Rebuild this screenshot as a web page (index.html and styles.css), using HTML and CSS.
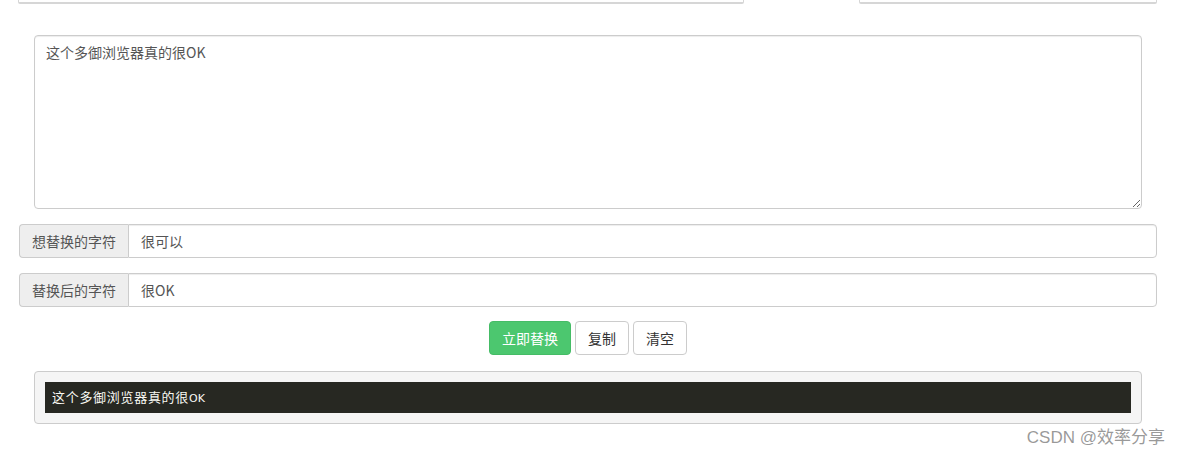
FILE: index.html
```html
<!DOCTYPE html>
<html lang="zh-CN">
<head>
    <meta charset="UTF-8">
    <meta name="viewport" content="width=device-width, initial-scale=1.0">
    <title>字符替换</title>
    <link rel="stylesheet" href="styles.css">
</head>
<body>
    <div class="page">
        <div class="tabs">
            <div class="tab tab-left"></div>
            <div class="tab-gap"></div>
            <div class="tab tab-right"></div>
        </div>

        <div class="source-wrap">
            <textarea class="source" id="source">这个多御浏览器真的很OK</textarea>
        </div>

        <div class="input-group">
            <span class="addon">想替换的字符</span>
            <input type="text" class="field" id="from" value="很可以">
        </div>
        <div class="input-group">
            <span class="addon">替换后的字符</span>
            <input type="text" class="field" id="to" value="很OK">
        </div>

        <div class="actions">
            <button class="btn btn-green" onclick="doReplace()">立即替换</button>
            <button class="btn" onclick="copyResult()">复制</button>
            <button class="btn" onclick="clearAll()">清空</button>
        </div>

        <div class="result-wrap">
            <pre class="result" id="result">这个多御浏览器真的很<span class="latin">OK</span></pre>
        </div>

        <div class="watermark">CSDN @效率分享</div>
    </div>

    <script>
        function doReplace() {
            const src = document.getElementById('source').value;
            const from = document.getElementById('from').value;
            const to = document.getElementById('to').value;
            document.getElementById('result').textContent = from ? src.split(from).join(to) : src;
        }

        function copyResult() {
            const text = document.getElementById('result').textContent;
            if (navigator.clipboard) navigator.clipboard.writeText(text);
        }

        function clearAll() {
            document.getElementById('source').value = '';
            document.getElementById('result').textContent = '';
        }
    </script>
</body>
</html>
```

FILE: styles.css
```css
* {
    box-sizing: border-box;
}
body, html {
    margin: 0;
    padding: 0;
    background: #fff;
    font-family: "Microsoft YaHei", "Noto Sans CJK SC", "Liberation Sans", sans-serif;
    font-size: 14px;
    color: #333;
    overflow: hidden;
}
.page {
    width: 1138px;
    margin-left: 19px;
}
.tabs {
    display: flex;
    height: 4px;
}
.tab {
    height: 4px;
    border: 1px solid #d6d6d6;
    border-top: none;
    border-bottom: 2px solid #d6d6d6;
    border-radius: 0 0 2px 2px;
}
.tab-left {
    width: 726px;
    margin-left: -1px;
}
.tab-gap {
    width: 115px;
}
.tab-right {
    flex: 1;
}
.source-wrap {
    padding: 31px 15px 0;
}
.source {
    display: block;
    width: 100%;
    height: 174px;
    padding: 6px 11px;
    border: 1px solid #ccc;
    border-radius: 4px;
    font-family: inherit;
    font-size: 14px;
    line-height: 20px;
    color: #555;
    resize: vertical;
    box-shadow: inset 0 1px 1px rgba(0,0,0,0.075);
}
.input-group {
    display: flex;
    height: 34px;
    margin-top: 15px;
}
.addon {
    width: 109px;
    display: flex;
    align-items: center;
    padding: 0 12px;
    background: #eee;
    border: 1px solid #ccc;
    border-right: none;
    border-radius: 4px 0 0 4px;
    color: #555;
    font-size: 14px;
}
.field {
    flex: 1;
    height: 34px;
    padding: 6px 12px;
    border: 1px solid #ccc;
    border-radius: 0 4px 4px 0;
    font-family: inherit;
    font-size: 14px;
    color: #555;
    box-shadow: inset 0 1px 1px rgba(0,0,0,0.075);
}
.actions {
    display: flex;
    justify-content: center;
    gap: 4px;
    margin-top: 14px;
}
.btn {
    height: 34px;
    padding: 0 12px;
    border: 1px solid #ccc;
    border-radius: 4px;
    background: #fff;
    color: #333;
    font-family: inherit;
    font-size: 14px;
    cursor: pointer;
}
.btn-green {
    background: #4cc76f;
    border-color: #45bc66;
    color: #fff;
}
.result-wrap {
    margin: 16px 15px 0;
    padding: 10px 10px;
    background: #f5f5f5;
    border: 1px solid #ccc;
    border-radius: 4px;
}
.result {
    margin: 0;
    height: 31px;
    padding: 0 7px;
    background: #272822;
    color: #f8f8f2;
    font-family: "Noto Sans CJK SC", "DejaVu Sans Mono", monospace;
    font-size: 13px;
    letter-spacing: 0.7px;
    line-height: 30px;
    white-space: pre;
}
.result .latin {
    font-family: "DejaVu Sans", sans-serif;
    font-size: 11px;
    letter-spacing: 0;
}
.watermark {
    text-align: right;
    margin-right: -8px;
    margin-top: -1px;
    color: rgba(120, 120, 120, 0.75);
    font-family: "Liberation Sans", "Noto Sans CJK SC", sans-serif;
    font-size: 17px;
}
```
